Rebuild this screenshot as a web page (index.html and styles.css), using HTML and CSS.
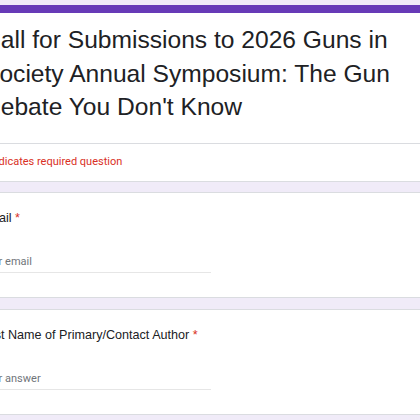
FILE: index.html
```html
<!DOCTYPE html>
<html lang="en">
<head>
<meta charset="utf-8">
<title>Call for Submissions</title>
<link rel="stylesheet" href="styles.css">
</head>
<body>
<main class="form">
  <section class="card head-card">
    <div class="head-title">
      <h1 class="title">Call for Submissions to 2026 Guns in Society Annual Symposium: The Gun Debate You Don't Know</h1>
    </div>
    <div class="head-note">
      <p class="required-note">* Indicates required question</p>
    </div>
  </section>
  <section class="card question">
    <div class="label">Email <span class="star">*</span></div>
    <div class="field"><span class="placeholder">Your email</span></div>
  </section>
  <section class="card question">
    <div class="label">First Name of Primary/Contact Author <span class="star">*</span></div>
    <div class="field"><span class="placeholder">Your answer</span></div>
  </section>
</main>
</body>
</html>
```

FILE: styles.css
```css
html, body {
  margin: 0;
  padding: 0;
  background: #f0ebf8;
  overflow: hidden;
}
body {
  padding-top: 5px;
}
.form {
  width: 640px;
  margin-left: -42px;
}
.card {
  background: #ffffff;
  border: 1px solid #dadce0;
  border-radius: 8px;
  margin-bottom: 11px;
}
.head-card {
  border-top: 8px solid #673ab7;
  margin-bottom: 10px;
}
.head-title {
  padding: 10px 24px 19px 24px;
  border-bottom: 1px solid #dadce0;
}
.title {
  margin: 0;
  font-family: "Liberation Sans", Arial, sans-serif;
  font-size: 24.6px;
  font-weight: 400;
  line-height: 33.5px;
  color: #202124;
  width: 440px;
}
.head-note {
  padding: 10px 24px 11px 23px;
}
.required-note {
  margin: 0;
  font-family: Roboto, "Liberation Sans", sans-serif;
  font-size: 11px;
  line-height: 16px;
  color: #d93025;
}
.question {
  padding: 17px 24px 24px 21px;
}
.label {
  font-family: "Liberation Sans", Arial, sans-serif;
  font-size: 12.6px;
  line-height: 17px;
  color: #202124;
}
.star {
  color: #d93025;
}
.field {
  margin-top: 27px;
  width: 231px;
  padding-bottom: 2px;
  border-bottom: 1px solid #e6e6e6;
}
.placeholder {
  display: block;
  font-family: Roboto, "Liberation Sans", sans-serif;
  font-size: 11px;
  line-height: 16px;
  color: #70757a;
}
```
